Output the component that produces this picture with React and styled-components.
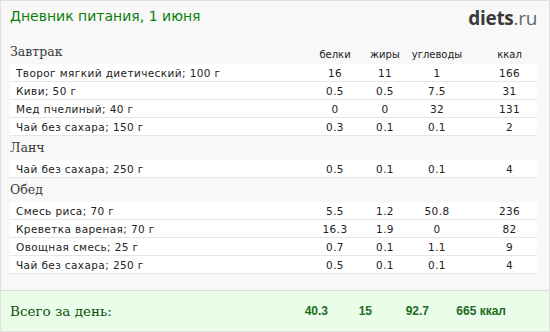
import React from 'react';
import styled, { createGlobalStyle } from 'styled-components';

const GlobalStyle = createGlobalStyle`
  body {
    margin: 0;
    background: #ffffff;
  }
  * {
    box-sizing: border-box;
  }
`;

const Card = styled.div`
  width: 550px;
  height: 332px;
  display: flex;
  flex-direction: column;
  background: #f8f8f8;
  border: 1px solid #e0e0e0;
  font-family: "DejaVu Sans", Verdana, sans-serif;
  color: #222;
`;

const Header = styled.div`
  height: 39px;
  display: flex;
  justify-content: space-between;
  align-items: flex-start;
  padding: 6px 12px 0 9px;
`;

const Title = styled.h1`
  margin: 0;
  font-size: 14px;
  font-weight: normal;
  color: #0a7f0a;
  line-height: 18px;
`;

const Logo = styled.div`
  font-family: "Open Sans", sans-serif;
  font-size: 19px;
  line-height: 22px;
  color: #666;
  letter-spacing: -0.3px;

  b {
    color: #3a3a3a;
    font-weight: 700;
  }
`;

const Body = styled.div`
  padding: 0 12px 0 9px;
`;

const Grid = styled.div`
  display: grid;
  grid-template-columns: 1fr 50px 50px 54px 73px;
  align-items: end;
`;

const SectionHead = styled(Grid)`
  height: 24px;
  padding-bottom: 4px;
`;

const SectionTitle = styled.div`
  font-family: "DejaVu Serif", serif;
  font-size: 12.5px;
  color: #3a3a3a;
  line-height: 16px;
`;

const ColTitle = styled.div`
  font-size: 10px;
  text-align: center;
  color: #222;
  padding-left: ${p => (p.$wide ? '18px' : '0')};
`;

const Row = styled(Grid)`
  height: 18px;
  align-items: center;
  background: #fff;
  border-bottom: 1px solid #e6e6e6;
  font-size: 10.5px;
  letter-spacing: 0.4px;
`;

const Name = styled.div`
  padding-left: 6px;
`;

const Num = styled.div`
  text-align: center;
  padding-left: ${p => (p.$wide ? '18px' : '0')};
`;

const Footer = styled.div`
  margin-top: auto;
  height: 41px;
  border-top: 1px solid #dcdcdc;
  background: #eafde9;
  padding: 0 43px 0 9px;
  display: grid;
  grid-template-columns: 1fr 50px 44px 57px 77px;
  align-items: center;
`;

const TotalLabel = styled.div`
  font-family: "DejaVu Serif", serif;
  font-size: 13.5px;
  color: #0b520b;
`;

const TotalNum = styled.div`
  font-family: "Liberation Sans", Arial, sans-serif;
  font-weight: bold;
  font-size: 12px;
  color: #1e6a1e;
  text-align: right;
`;

const meals = [
  {
    title: 'Завтрак',
    items: [
      ['Творог мягкий диетический; 100 г', '16', '11', '1', '166'],
      ['Киви; 50 г', '0.5', '0.5', '7.5', '31'],
      ['Мед пчелиный; 40 г', '0', '0', '32', '131'],
      ['Чай без сахара; 150 г', '0.3', '0.1', '0.1', '2'],
    ],
  },
  {
    title: 'Ланч',
    items: [['Чай без сахара; 250 г', '0.5', '0.1', '0.1', '4']],
  },
  {
    title: 'Обед',
    items: [
      ['Смесь риса; 70 г', '5.5', '1.2', '50.8', '236'],
      ['Креветка вареная; 70 г', '16.3', '1.9', '0', '82'],
      ['Овощная смесь; 25 г', '0.7', '0.1', '1.1', '9'],
      ['Чай без сахара; 250 г', '0.5', '0.1', '0.1', '4'],
    ],
  },
];

const App = () => {
  return (
    <>
      <GlobalStyle />
      <Card>
        <Header>
          <Title>Дневник питания, 1 июня</Title>
          <Logo><b>diets</b>.ru</Logo>
        </Header>
        <Body>
          {meals.map((meal, i) => (
            <div key={meal.title}>
              <SectionHead>
                <SectionTitle>{meal.title}</SectionTitle>
                {i === 0 && (
                  <>
                    <ColTitle>белки</ColTitle>
                    <ColTitle>жиры</ColTitle>
                    <ColTitle>углеводы</ColTitle>
                    <ColTitle $wide>ккал</ColTitle>
                  </>
                )}
              </SectionHead>
              {meal.items.map((it, j) => (
                <Row key={j}>
                  <Name>{it[0]}</Name>
                  <Num>{it[1]}</Num>
                  <Num>{it[2]}</Num>
                  <Num>{it[3]}</Num>
                  <Num $wide>{it[4]}</Num>
                </Row>
              ))}
            </div>
          ))}
        </Body>
        <Footer>
          <TotalLabel>Всего за день:</TotalLabel>
          <TotalNum>40.3</TotalNum>
          <TotalNum>15</TotalNum>
          <TotalNum>92.7</TotalNum>
          <TotalNum>665 ккал</TotalNum>
        </Footer>
      </Card>
    </>
  );
};

export default App;
